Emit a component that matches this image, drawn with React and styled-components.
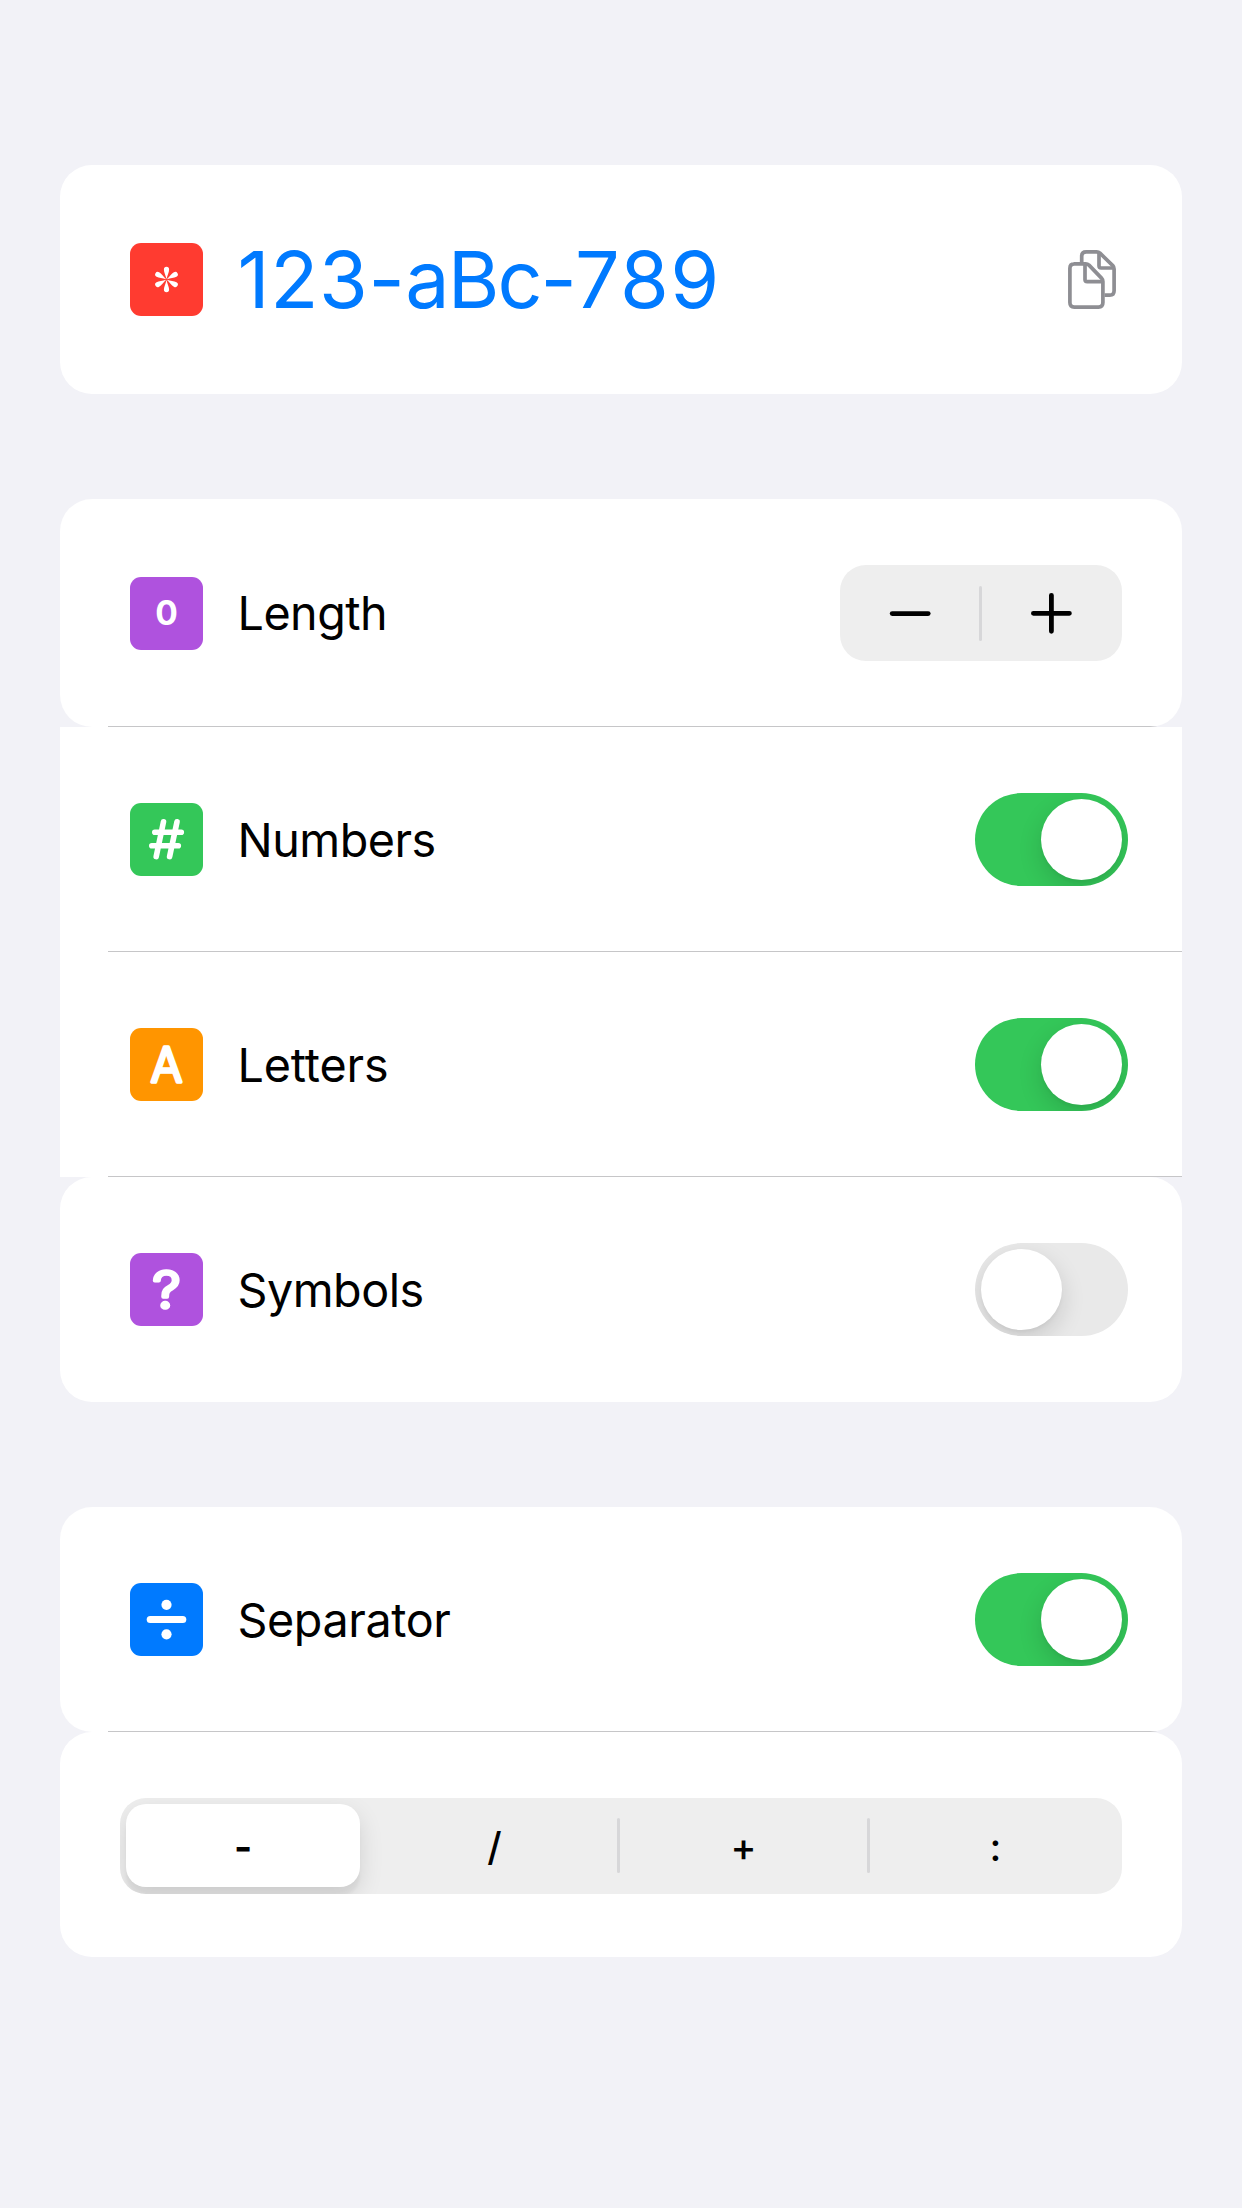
import React, { useState } from "react";
import styled, { createGlobalStyle } from "styled-components";

const GlobalStyle = createGlobalStyle`
  * { box-sizing: border-box; }
  body {
    margin: 0;
    background: #f2f2f7;
    font-family: Inter, "Liberation Sans", sans-serif;
    color: #000;
  }
  button { font: inherit; color: inherit; border: 0; padding: 0; background: none; }
`;

const Screen = styled.main`
  min-height: 2208px;
  padding: 165px 60px 0;
  display: flex;
  flex-direction: column;
`;

const Section = styled.section`
  display: flex;
  flex-direction: column;
  margin-bottom: 105px;
`;

const Row = styled.div`
  display: flex;
  align-items: center;
  height: ${(p) => p.$height || 225}px;
  padding: ${(p) => p.$top || 0}px ${(p) => p.$right || 54}px 0 ${(p) => p.$left || 70}px;
  background-color: #fff;
  background-image: ${(p) => (p.$line ? "linear-gradient(#c6c6c8, #c6c6c8)" : "none")};
  background-position: 48px 100%;
  background-size: 100% 1px;
  background-repeat: no-repeat;
  border-radius: ${(p) => (p.$rounded ? 32 : 0)}px;
`;

const Tile = styled.div`
  width: 73px;
  height: 73px;
  flex: none;
  display: flex;
  align-items: center;
  justify-content: center;
  border-radius: 11px;
  background: ${(p) => p.$color};
  color: #fff;
  font-size: 33.5px;
  font-weight: 650;
  line-height: 71px;
  svg { display: block; }
`;

const Label = styled.span`
  flex: 1;
  margin-left: 34.5px;
  padding-top: ${(p) => p.$top ?? 1}px;
  font-size: 46.7px;
  line-height: 60px;
  letter-spacing: ${(p) => p.$spacing ?? -0.5}px;
`;

const Password = styled.span`
  flex: 1;
  margin-left: 34.5px;
  padding-bottom: 2px;
  font-size: 79px;
  line-height: 96px;
  color: #007aff;
`;

const Run = styled.span`
  letter-spacing: ${(p) => p.$spacing}px;
`;

const CopyButton = styled.button`
  width: 48px;
  height: 59px;
  margin-right: 12px;
  svg { display: block; }
`;

const StepperBox = styled.div`
  display: flex;
  align-items: center;
  width: 282px;
  height: 96px;
  padding-right: 1px;
  margin-right: 6px;
  border-radius: 26px;
  background: #eeeeee;
`;

const StepButton = styled.button`
  flex: 1;
  height: 96px;
  display: flex;
  align-items: center;
  justify-content: center;
`;

const Divider = styled.span`
  width: 3px;
  height: 55px;
  margin-bottom: ${(p) => p.$lift || 0}px;
  border-radius: 2px;
  background: #d7d7d9;
`;

const Track = styled.button`
  width: 153px;
  height: 93px;
  padding: 6px;
  display: flex;
  justify-content: ${(p) => (p.$on ? "flex-end" : "flex-start")};
  overflow: hidden;
  border-radius: 47px;
  background: ${(p) => (p.$on ? "#34c759" : "#e9e9e9")};
`;

const Knob = styled.span`
  width: 81px;
  height: 81px;
  border-radius: 50%;
  background: #fff;
  box-shadow: 0 9px 24px rgba(0, 0, 0, 0.14), 0 3px 3px rgba(0, 0, 0, 0.03);
`;

const Segments = styled.div`
  display: flex;
  align-items: center;
  width: 1002px;
  height: 96px;
  padding-left: 6px;
  overflow: hidden;
  border-radius: 26px;
  background: #eeeeee;
`;

const Segment = styled.button`
  width: ${(p) => p.$width}px;
  flex: none;
  height: 83px;
  margin-bottom: 1px;
  margin-right: ${(p) => (p.$selected ? 12 : 0)}px;
  padding-top: 2px;
  border-radius: 20px;
  font-size: 39px;
  line-height: 81px;
  font-weight: ${(p) => (p.$selected ? 650 : 500)};
  background: ${(p) => (p.$selected ? "#fff" : "transparent")};
  box-shadow: ${(p) => (p.$selected ? "0 9px 24px rgba(0,0,0,.12), 0 9px 3px rgba(0,0,0,.04)" : "none")};
`;

const HashIcon = () => (
  <svg width="73" height="73" viewBox="0 0 73 73" fill="none" stroke="#fff" strokeWidth="5.6" strokeLinecap="round">
    <path d="M33.5 18.8 26.2 53.6M47 18.8 39.6 53.6M24.8 29.3H51.3M21.8 42.7H48.3" />
  </svg>
);

const DivideIcon = () => (
  <svg width="73" height="73" viewBox="0 0 73 73" fill="#fff">
    <circle cx="36.5" cy="21.8" r="5.1" />
    <rect x="16.7" y="33" width="39.6" height="7" rx="3.5" />
    <circle cx="36.5" cy="51.3" r="5.1" />
  </svg>
);

const AsteriskIcon = () => (
  <svg width="73" height="73" viewBox="-36.5 -36.5 73 73" fill="#fff">
    {[0, 60, 120, 180, 240, 300].map((a) => (
      <path key={a} transform={`rotate(${a})`} d="M0 -.4C-.8-4-2.6-7.3-2.6-10A2.6 2.7 0 0 1 2.6-10C2.6-7.3.8-4 0-.4Z" />
    ))}
  </svg>
);

const RoundedGlyph = ({ char, size, width, x, y, stroke }) => (
  <svg width="73" height="73" viewBox="0 0 73 73">
    <text
      x={x}
      y={y}
      textLength={width}
      lengthAdjust="spacingAndGlyphs"
      fontSize={size}
      fontWeight="300"
      fill="#fff"
      stroke="#fff"
      strokeWidth={stroke}
      strokeLinejoin="round"
    >
      {char}
    </text>
  </svg>
);

const CopyIcon = () => (
  <svg width="48" height="59" viewBox="0 0 48 59" fill="none" stroke="#8e8e93" strokeWidth="3.7" strokeLinejoin="round">
    <path d="M13.7 12.5V6.3Q13.7 1.9 18.2 1.9H28.6Q30.6 1.9 32 3.2L44.8 15.6Q46.1 17 46.1 19V40.8Q46.1 45.2 41.8 45.2H36.5" />
    <path d="M31 2.4V15.8Q31 18 33.2 18H45.6" />
    <path d="M6.2 13.8H17.6Q19.6 13.8 21 15.1L33.5 28.1Q34.9 29.6 34.9 31.6V52.6Q34.9 57.1 30.5 57.1H6.3Q1.9 57.1 1.9 52.6V18.2Q1.9 13.8 6.3 13.8Z" />
    <path d="M17 14V29.4Q17 31.6 19.2 31.6H34.5" />
  </svg>
);

const StepIcon = ({ plus }) => (
  <svg width="42" height="42" viewBox="0 0 42 42" stroke="#000" strokeWidth="4.8" strokeLinecap="round">
    <path d={plus ? "M2.4 21.3H38.4M20.4 3.3V39.3" : "M3.2 21.6H39.2"} />
  </svg>
);

const Toggle = ({ name, initial }) => {
  const [on, setOn] = useState(initial);
  return (
    <Track role="switch" aria-label={name} aria-checked={on} $on={on} onClick={() => setOn(!on)}>
      <Knob />
    </Track>
  );
};

const separators = [
  { char: "-", width: 234 },
  { char: "/", width: 245 },
  { char: "+", width: 247 },
  { char: ":", width: 251 },
];

export default function App() {
  return (
    <>
      <GlobalStyle />
      <Screen>
        <Section>
          <Row $height={229} $rounded>
            <Tile $color="#ff3b30"><AsteriskIcon /></Tile>
            <Password>
              <Run $spacing={0.6}>123-</Run>
              <Run $spacing={-2}>aBc-</Run>
              <Run $spacing={1.4}>789</Run>
            </Password>
            <CopyButton aria-label="Copy"><CopyIcon /></CopyButton>
          </Row>
        </Section>

        <Section>
          <Row $height={228} $rounded $line>
            <Tile $color="#af52de">0</Tile>
            <Label $top={0}>Length</Label>
            <StepperBox>
              <StepButton aria-label="Decrease"><StepIcon /></StepButton>
              <Divider />
              <StepButton aria-label="Increase"><StepIcon plus /></StepButton>
            </StepperBox>
          </Row>
          <Row $line>
            <Tile $color="#34c759"><HashIcon /></Tile>
            <Label>Numbers</Label>
            <Toggle name="Numbers" initial={true} />
          </Row>
          <Row $line>
            <Tile $color="#ff9500">
              <RoundedGlyph char="A" size={48.5} width={31.5} x={20.75} y={54.1} stroke={3.6} />
            </Tile>
            <Label $spacing={-0.15}>Letters</Label>
            <Toggle name="Letters" initial={true} />
          </Row>
          <Row $rounded>
            <Tile $color="#af52de">
              <RoundedGlyph char="?" size={50.5} width={28} x={22.5} y={54.6} stroke={3.7} />
            </Tile>
            <Label>Symbols</Label>
            <Toggle name="Symbols" initial={false} />
          </Row>
        </Section>

        <Section>
          <Row $rounded $line>
            <Tile $color="#007aff"><DivideIcon /></Tile>
            <Label $spacing={-0.4}>Separator</Label>
            <Toggle name="Separator" initial={true} />
          </Row>
          <Row $rounded $left={60} $right={60} $top={3}>
            <Segments>
              {separators.map(({ char, width }, i) => (
                <React.Fragment key={char}>
                  {i > 1 && <Divider $lift={2} />}
                  <Segment $selected={i === 0} $width={width}>{char}</Segment>
                </React.Fragment>
              ))}
            </Segments>
          </Row>
        </Section>
      </Screen>
    </>
  );
}
